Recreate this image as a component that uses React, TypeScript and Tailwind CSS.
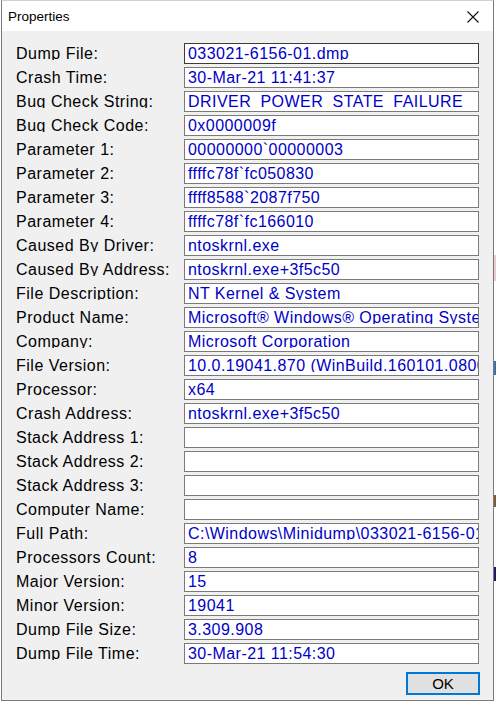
import React from 'react';

const rows: { label: string; value: string }[] = [
  { label: 'Dump File:', value: '033021-6156-01.dmp' },
  { label: 'Crash Time:', value: '30-Mar-21 11:41:37' },
  { label: 'Bug Check String:', value: 'DRIVER_POWER_STATE_FAILURE' },
  { label: 'Bug Check Code:', value: '0x0000009f' },
  { label: 'Parameter 1:', value: '00000000`00000003' },
  { label: 'Parameter 2:', value: 'ffffc78f`fc050830' },
  { label: 'Parameter 3:', value: 'ffff8588`2087f750' },
  { label: 'Parameter 4:', value: 'ffffc78f`fc166010' },
  { label: 'Caused By Driver:', value: 'ntoskrnl.exe' },
  { label: 'Caused By Address:', value: 'ntoskrnl.exe+3f5c50' },
  { label: 'File Description:', value: 'NT Kernel & System' },
  { label: 'Product Name:', value: 'Microsoft® Windows® Operating System' },
  { label: 'Company:', value: 'Microsoft Corporation' },
  { label: 'File Version:', value: '10.0.19041.870 (WinBuild.160101.0800)' },
  { label: 'Processor:', value: 'x64' },
  { label: 'Crash Address:', value: 'ntoskrnl.exe+3f5c50' },
  { label: 'Stack Address 1:', value: '' },
  { label: 'Stack Address 2:', value: '' },
  { label: 'Stack Address 3:', value: '' },
  { label: 'Computer Name:', value: '' },
  { label: 'Full Path:', value: 'C:\\Windows\\Minidump\\033021-6156-01.dmp' },
  { label: 'Processors Count:', value: '8' },
  { label: 'Major Version:', value: '15' },
  { label: 'Minor Version:', value: '19041' },
  { label: 'Dump File Size:', value: '3.309.908' },
  { label: 'Dump File Time:', value: '30-Mar-21 11:54:30' },
];

const font = { fontFamily: '"Liberation Sans", Arial, sans-serif' };

export default function App() {
  return (
    <div className="relative flex h-[702px] w-[496px] overflow-hidden bg-white" style={font}>
      <div className="ml-[1px] flex h-[701px] w-[493px] flex-col border-x border-b border-t border-x-[#7a7a7a] border-b-[#7a7a7a] border-t-[#d0d0d0] bg-[#f0f0f0]">
        {/* title bar */}
        <div className="flex h-[30px] shrink-0 items-center justify-between bg-white pl-[6px] pr-[12px]">
          <span className="pt-[2px] text-[13.5px] leading-none text-black">Properties</span>
          <svg width="14" height="14" viewBox="0 0 14 14" className="mr-[1px] mt-[2px]">
            <path d="M1.5 1.5 L12.5 12.5 M12.5 1.5 L1.5 12.5" stroke="#111" strokeWidth="1.1" />
          </svg>
        </div>

        <div className="flex flex-col pl-[14px] pt-[12px]">
          {rows.map((row, i) => (
            <div key={row.label} className="mb-[3px] flex h-[21px] items-start">
              <div className="mt-[1px] h-[16px] w-[168px] overflow-hidden whitespace-nowrap pt-[2px] text-[16px] leading-[16px] tracking-[0.5px] text-black">
                {row.label}
              </div>
              <div
                className={`h-[21px] w-[295px] border bg-white ${
                  i === 0 ? 'border-[#3c3c3c]' : 'border-[#7a7a7a]'
                }`}
              >
                <div className="h-[16px] overflow-hidden whitespace-nowrap pl-[3px] pt-[2px] text-[16px] leading-[16px] tracking-[0.45px] text-[#0000c8]">
                  {row.value}
                </div>
              </div>
            </div>
          ))}
        </div>

        <div className="flex justify-end pr-[13px] pt-[5px]">
          <button
            type="button"
            className="flex h-[23px] w-[74px] items-center justify-center border-2 border-[#0078d7] bg-[#e1e1e1] text-[15px] leading-none text-black"
          >
            OK
          </button>
        </div>
      </div>

      {/* background window peeking out on the right */}
      <div className="flex w-[2px] flex-col bg-white">
        <div className="mt-[255px] h-[26px] bg-[#e8cccc]" />
        <div className="mt-[80px] h-[14px] bg-[#3a6fb0]" />
        <div className="mt-[120px] h-[12px] bg-[#7a5a3a]" />
        <div className="mt-[60px] h-[14px] bg-[#1b1b6a]" />
      </div>
    </div>
  );
}
